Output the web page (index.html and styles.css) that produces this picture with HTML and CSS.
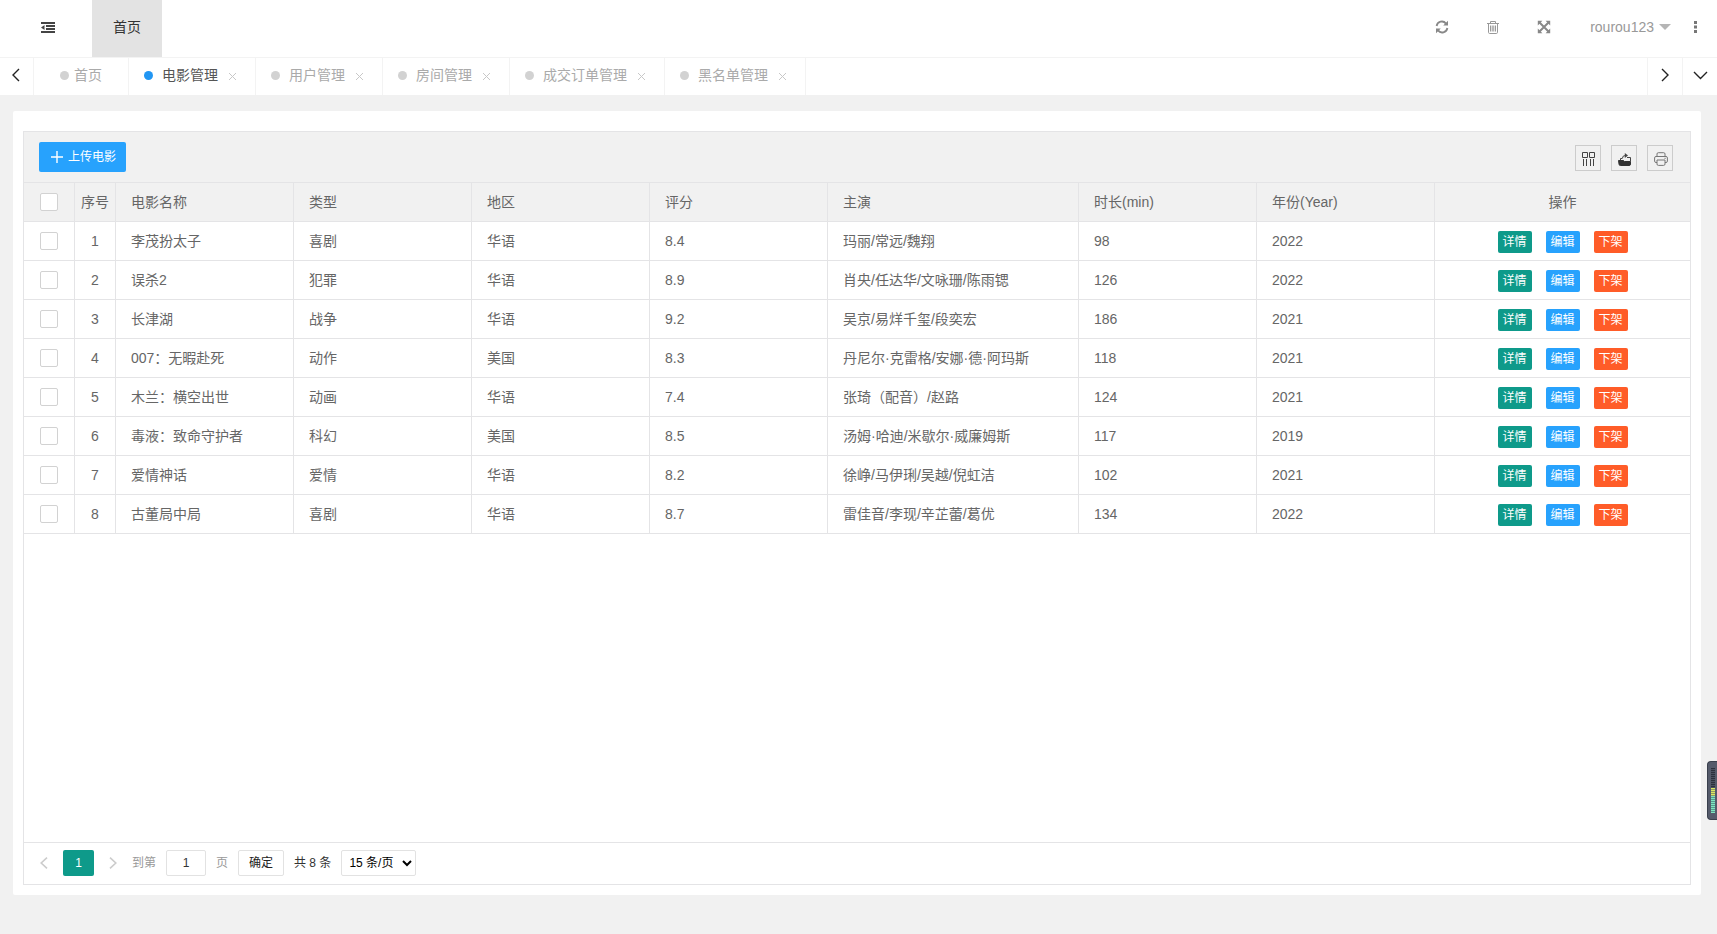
FILE: index.html
```html
<!DOCTYPE html>
<html lang="zh-CN">
<head>
<meta charset="utf-8">
<title>电影管理</title>
<link rel="stylesheet" href="styles.css">
</head>
<body>
<header class="topbar">
  <button class="icon-btn menu-btn" aria-label="收起菜单">
    <svg width="14" height="11" viewBox="0 0 14 11" fill="#444"><path d="M0 0h14v2H0zM5 3h9v2H5zM5 6h9v2H5zM0 9h14v2H0zM0 5.500l3.500-2.500v5z"/></svg>
  </button>
  <a class="nav-home" href="#">首页</a>
  <div class="top-tools">
    <button class="icon-btn" aria-label="刷新">
      <svg width="14" height="14" viewBox="0 0 14 14" fill="none" stroke="#888" stroke-width="1.8"><path d="M1.6 6A5.3 5.3 0 0 1 11 3.6M12.4 8A5.3 5.3 0 0 1 3 10.4"/><path d="M13 .8v4.8H8.2zM1 13.2V8.4h4.8z" fill="#888" stroke="none"/></svg>
    </button>
    <button class="icon-btn" aria-label="清理">
      <svg width="12" height="14" viewBox="0 0 12 14" fill="none" stroke="#999"><path d="M0 3.500h12M3.500 3.500v-2h5v2M1.500 3.500v8.800q0 1.200 1.200 1.200h6.600q1.200 0 1.200-1.200V3.500"/><path d="M3.500 5.500v6M5.200 5.500v6M6.800 5.500v6M8.500 5.500v6"/></svg>
    </button>
    <button class="icon-btn" aria-label="全屏">
      <svg width="14" height="14" viewBox="0 0 14 14" fill="#888"><path d="M.8.8h4.6L.8 5.4zM13.2.8v4.6L8.6.8zM.8 13.2V8.6l4.6 4.6zM13.2 13.2H8.6l4.6-4.6z"/><path d="M2 2l10 10M12 2L2 12" stroke="#888" stroke-width="2"/></svg>
    </button>
    <button class="user-btn">rourou123<span class="caret"></span></button>
    <button class="icon-btn" aria-label="更多">
      <svg width="3" height="12" viewBox="0 0 3 12" fill="#777"><path d="M0 0h3v3H0zM0 4.500h3v3H0zM0 9h3v3H0z"/></svg>
    </button>
  </div>
</header>

<nav class="tabbar">
  <button class="tab-ctl ctl-left" aria-label="向左">
    <svg width="8" height="14" viewBox="0 0 8 14" fill="none" stroke="#222" stroke-width="1.4"><path d="M7 1L1 7l6 6"/></svg>
  </button>
  <a class="tab tab-first" href="#"><span class="dot"></span>首页</a>
  <a class="tab active" href="#"><span class="dot"></span>电影管理<svg class="x" viewBox="0 0 9 9"><path d="M1 1l7 7M8 1L1 8"/></svg></a>
  <a class="tab" href="#"><span class="dot"></span>用户管理<svg class="x" viewBox="0 0 9 9"><path d="M1 1l7 7M8 1L1 8"/></svg></a>
  <a class="tab" href="#"><span class="dot"></span>房间管理<svg class="x" viewBox="0 0 9 9"><path d="M1 1l7 7M8 1L1 8"/></svg></a>
  <a class="tab" href="#"><span class="dot"></span>成交订单管理<svg class="x" viewBox="0 0 9 9"><path d="M1 1l7 7M8 1L1 8"/></svg></a>
  <a class="tab" href="#"><span class="dot"></span>黑名单管理<svg class="x" viewBox="0 0 9 9"><path d="M1 1l7 7M8 1L1 8"/></svg></a>
  <button class="tab-ctl ctl-right" aria-label="向右">
    <svg width="8" height="14" viewBox="0 0 8 14" fill="none" stroke="#222" stroke-width="1.4"><path d="M1 1l6 6-6 6"/></svg>
  </button>
  <button class="tab-ctl ctl-down" aria-label="更多标签">
    <svg width="15" height="9" viewBox="0 0 15 9" fill="none" stroke="#222" stroke-width="1.4"><path d="M1 1l6.5 6.5L14 1"/></svg>
  </button>
</nav>

<main class="card">
  <section class="view">
    <div class="toolbar">
      <button class="upload"><svg width="12" height="12" viewBox="0 0 12 12" stroke="#fff" stroke-width="1.4"><path d="M6 0v12M0 6h12"/></svg>上传电影</button>
      <div class="tool-icons">
        <button class="tool" aria-label="筛选列"><svg width="14" height="14" viewBox="0 0 14 14" fill="none" stroke="#444"><path d="M.5.5h5v5h-5zM7.500.5h5v5h-5zM1.500 7v7M4.500 7v7M8.500 7v7M11.500 7v7"/></svg></button>
        <button class="tool" aria-label="导出"><svg width="14" height="14" viewBox="0 0 14 14" fill="none" stroke="#444"><path d="M.5 8.500h5l1 1h6v2.500q0 1.500-1.500 1.500H2.500Q1 13.500 1 12z" fill="#333" stroke="#333"/><path d="M2.500 8V6.500h2M9 5.500h3.500v4M4.500 6Q4.500 3.500 7.500 3.500"/><path d="M6.800 1L10 3.500 6.800 6z" fill="#444" stroke="none"/></svg></button>
        <button class="tool" aria-label="打印"><svg width="14" height="14" viewBox="0 0 14 14" fill="none" stroke="#777"><path d="M3 4.500V2q0-1.300 1.300-1.300h5.400Q11 .7 11 2v2.500M3 10.500H2q-1.400 0-1.400-1.400V5.900Q.6 4.500 2 4.500h10q1.400 0 1.400 1.400v3.200q0 1.400-1.400 1.400h-1M3 8h8v4q0 1.400-1.400 1.400H4.400Q3 13.400 3 12zM10.500 6.300h1.200"/></svg></button>
      </div>
    </div>

    <div class="table-wrap">
    <table class="grid">
      <colgroup><col class="c-check"><col class="c-no"><col class="c-std"><col class="c-std"><col class="c-std"><col class="c-std"><col class="c-cast"><col class="c-std"><col class="c-std"><col></colgroup>
      <thead>
        <tr><th class="mid"><input type="checkbox" aria-label="全选"></th><th class="mid">序号</th><th>电影名称</th><th>类型</th><th>地区</th><th>评分</th><th>主演</th><th>时长(min)</th><th>年份(Year)</th><th class="mid">操作</th></tr>
      </thead>
      <tbody>
        <tr><td class="mid"><input type="checkbox" aria-label="选择 1"></td><td class="mid">1</td><td>李茂扮太子</td><td>喜剧</td><td>华语</td><td>8.4</td><td>玛丽/常远/魏翔</td><td>98</td><td>2022</td><td><div class="acts"><button class="act green">详情</button><button class="act blue">编辑</button><button class="act red">下架</button></div></td></tr>
        <tr><td class="mid"><input type="checkbox" aria-label="选择 2"></td><td class="mid">2</td><td>误杀2</td><td>犯罪</td><td>华语</td><td>8.9</td><td>肖央/任达华/文咏珊/陈雨锶</td><td>126</td><td>2022</td><td><div class="acts"><button class="act green">详情</button><button class="act blue">编辑</button><button class="act red">下架</button></div></td></tr>
        <tr><td class="mid"><input type="checkbox" aria-label="选择 3"></td><td class="mid">3</td><td>长津湖</td><td>战争</td><td>华语</td><td>9.2</td><td>吴京/易烊千玺/段奕宏</td><td>186</td><td>2021</td><td><div class="acts"><button class="act green">详情</button><button class="act blue">编辑</button><button class="act red">下架</button></div></td></tr>
        <tr><td class="mid"><input type="checkbox" aria-label="选择 4"></td><td class="mid">4</td><td>007：无暇赴死</td><td>动作</td><td>美国</td><td>8.3</td><td>丹尼尔·克雷格/安娜·德·阿玛斯</td><td>118</td><td>2021</td><td><div class="acts"><button class="act green">详情</button><button class="act blue">编辑</button><button class="act red">下架</button></div></td></tr>
        <tr><td class="mid"><input type="checkbox" aria-label="选择 5"></td><td class="mid">5</td><td>木兰：横空出世</td><td>动画</td><td>华语</td><td>7.4</td><td>张琦（配音）/赵路</td><td>124</td><td>2021</td><td><div class="acts"><button class="act green">详情</button><button class="act blue">编辑</button><button class="act red">下架</button></div></td></tr>
        <tr><td class="mid"><input type="checkbox" aria-label="选择 6"></td><td class="mid">6</td><td>毒液：致命守护者</td><td>科幻</td><td>美国</td><td>8.5</td><td>汤姆·哈迪/米歇尔·威廉姆斯</td><td>117</td><td>2019</td><td><div class="acts"><button class="act green">详情</button><button class="act blue">编辑</button><button class="act red">下架</button></div></td></tr>
        <tr><td class="mid"><input type="checkbox" aria-label="选择 7"></td><td class="mid">7</td><td>爱情神话</td><td>爱情</td><td>华语</td><td>8.2</td><td>徐峥/马伊琍/吴越/倪虹洁</td><td>102</td><td>2021</td><td><div class="acts"><button class="act green">详情</button><button class="act blue">编辑</button><button class="act red">下架</button></div></td></tr>
        <tr><td class="mid"><input type="checkbox" aria-label="选择 8"></td><td class="mid">8</td><td>古董局中局</td><td>喜剧</td><td>华语</td><td>8.7</td><td>雷佳音/李现/辛芷蕾/葛优</td><td>134</td><td>2022</td><td><div class="acts"><button class="act green">详情</button><button class="act blue">编辑</button><button class="act red">下架</button></div></td></tr>
      </tbody>
    </table>
    </div>

    <div class="pager">
      <button class="icon-btn" aria-label="上一页"><svg width="8" height="12" viewBox="0 0 8 12" fill="none" stroke="#ccc" stroke-width="1.600"><path d="M7 .6L1.200 6 7 11.400"/></svg></button>
      <button class="page-now">1</button>
      <button class="icon-btn" aria-label="下一页"><svg width="8" height="12" viewBox="0 0 8 12" fill="none" stroke="#ccc" stroke-width="1.600"><path d="M1 .6L6.800 6 1 11.400"/></svg></button>
      <label class="jump" for="page">到第</label>
      <input class="page-input" id="page" type="text" value="1">
      <span class="page-word">页</span>
      <button class="confirm">确定</button>
      <span class="total">共 8 条</span>
      <select class="limit" aria-label="每页条数"><option>15 条/页</option><option>30 条/页</option></select>
    </div>
  </section>
</main>

<aside class="meter" aria-hidden="true"><span class="meter-off"></span><span class="meter-mid"></span><span class="meter-on"></span></aside>
</body>
</html>
```
FILE: styles.css
```css
* { box-sizing: border-box; }

body {
  margin: 0;
  min-height: 100vh;
  display: flex;
  flex-direction: column;
  position: relative;
  overflow-x: hidden;
  background: #f1f1f1;
  color: #666;
  font: 14px/20px "Liberation Sans", "Noto Sans CJK SC", sans-serif;
}

button, input, select { font: inherit; color: inherit; margin: 0; }
button { cursor: pointer; padding: 0; border: 0; background: none; }
a { color: inherit; text-decoration: none; }
svg { display: block; flex: none; }
.icon-btn { display: flex; align-items: center; justify-content: center; }

/* Top bar */
.topbar { display: flex; height: 57px; background: #fff; }
.menu-btn { width: 92px; padding-left: 4px; padding-bottom: 2px; }
.nav-home {
  display: flex;
  align-items: center;
  padding: 0 21px 3px;
  background: #e3e3e3;
  color: #333;
}
.top-tools { display: flex; align-items: center; margin-left: auto; padding: 0 20px 3px 0; }
.top-tools .icon-btn + .icon-btn { margin-left: 38px; }
.user-btn { display: flex; align-items: center; gap: 5px; margin: 0 23px 0 39px; color: #999; }
.caret { border: 6px solid transparent; border-top-color: #b5b5b5; border-bottom: 0; }

/* Tabs */
.tabbar { display: flex; height: 38px; background: #fff; border-top: 1px solid #f3f3f3; }
.tab {
  display: flex;
  align-items: center;
  padding: 0 18px 3px 15px;
  border-right: 1px solid #f3f3f3;
  color: #aaa;
  white-space: nowrap;
}
.tab.active { color: #555; }
.dot { width: 9px; height: 9px; margin-right: 9px; border-radius: 50%; background: #d2d2d2; }
.active .dot { background: #2196f3; }
.tab-first { padding: 0 26px 3px 26px; }
.tab-first .dot { margin-right: 5px; }
.x { width: 9px; height: 9px; margin: 2px 0 0 10px; fill: none; stroke: #c8c8c8; }
.tab-ctl { display: flex; align-items: center; justify-content: center; width: 35px; padding-bottom: 3px; }
.ctl-left { width: 34px; padding-right: 2px; border-right: 1px solid #f3f3f3; }
.ctl-right { margin-left: auto; border-left: 1px solid #f3f3f3; }
.ctl-down { border-left: 1px solid #f3f3f3; }

/* Card */
.card {
  flex: 1;
  display: flex;
  margin: 16px 16px 39px 13px;
  padding: 20px 10px 10px;
  border-radius: 2px;
  background: #fff;
}
.view { flex: 1; min-width: 0; display: flex; flex-direction: column; border: 1px solid #e4e4e6; }
.toolbar {
  display: flex;
  align-items: center;
  justify-content: space-between;
  height: 51px;
  padding: 0 17px 0 15px;
  border-bottom: 1px solid #e4e4e6;
  background: #f1f1f1;
}
.upload {
  display: flex;
  align-items: center;
  gap: 5px;
  height: 30px;
  padding: 0 10px 0 12px;
  border-radius: 2px;
  background: #27a2fd;
  color: #fff;
  font-size: 12px;
}
.tool-icons { display: flex; gap: 10px; padding-top: 2px; }
.tool {
  display: flex;
  align-items: center;
  justify-content: center;
  width: 26px;
  height: 26px;
  padding: 1px 0 0 2px;
  border: 1px solid #ccc;
}

/* Table */
.table-wrap { flex: 1; overflow-x: auto; }
.grid { width: 100%; min-width: 1560px; table-layout: fixed; border-collapse: separate; border-spacing: 0; }
.c-check { width: 51px; }
.c-no { width: 41px; }
.c-std { width: 178px; }
.c-cast { width: 251px; }
th, td {
  height: 39px;
  padding: 0 15px;
  border: solid #e4e4e6;
  border-width: 0 1px 1px 0;
  font-weight: normal;
  text-align: left;
  white-space: nowrap;
}
th { background: #f1f1f1; }
th:last-child, td:last-child { border-right: 0; }
.mid { padding: 0; text-align: center; }
input[type="checkbox"] {
  appearance: none;
  display: block;
  width: 18px;
  height: 18px;
  margin: 0 auto;
  border: 1px solid #d2d2d2;
  border-radius: 2px;
  background: #fff;
}
input[type="checkbox"]:checked { background: #0e9a8a; }
.acts { display: flex; justify-content: center; gap: 14px; padding-top: 2px; }
.act { width: 34px; height: 22px; border-radius: 2px; color: #fff; font-size: 12px; }
.green { background: #0e9a8a; }
.blue { background: #27a2fd; }
.red { background: #ff5c28; }

/* Pager */
.pager {
  display: flex;
  align-items: center;
  height: 42px;
  padding: 0 16px 2px;
  border-top: 1px solid #e4e4e6;
  color: #333;
  font-size: 12px;
}
.page-now { width: 31px; height: 26px; margin: 0 15px; border-radius: 2px; background: #0e9a8a; color: #fff; }
.jump { margin: 0 10px 0 15px; color: #999; }
.page-input { width: 40px; height: 26px; padding: 0; border: 1px solid #e2e2e2; border-radius: 2px; text-align: center; }
.page-word { margin: 0 10px; color: #999; }
.confirm { width: 46px; height: 26px; border: 1px solid #e2e2e2; border-radius: 2px; color: #222; }
.total { margin: 0 10px; }
.limit { width: 75px; height: 26px; padding: 0 0 0 3px; border: 1px solid #e2e2e2; border-radius: 2px; background: #fff; color: #000; }

/* Level meter docked over the right edge */
.meter {
  position: absolute;
  right: 0;
  top: 761px;
  display: flex;
  flex-direction: column;
  width: 10px;
  height: 59px;
  padding: 6px 2px 6px 3px;
  border: 1px solid #3a404d;
  border-right: 0;
  border-radius: 4px 0 0 4px;
  background: #555b6b;
}
.meter-off { height: 20px; background: repeating-linear-gradient(#2c313d 0 1px, #4a5060 1px 2px); }
.meter-mid { height: 8px; background: repeating-linear-gradient(#dcea62 0 1px, #8f9a62 1px 2px); }
.meter-on { flex: 1; background: repeating-linear-gradient(#7fe6c0 0 1px, #58988e 1px 2px); }
```
